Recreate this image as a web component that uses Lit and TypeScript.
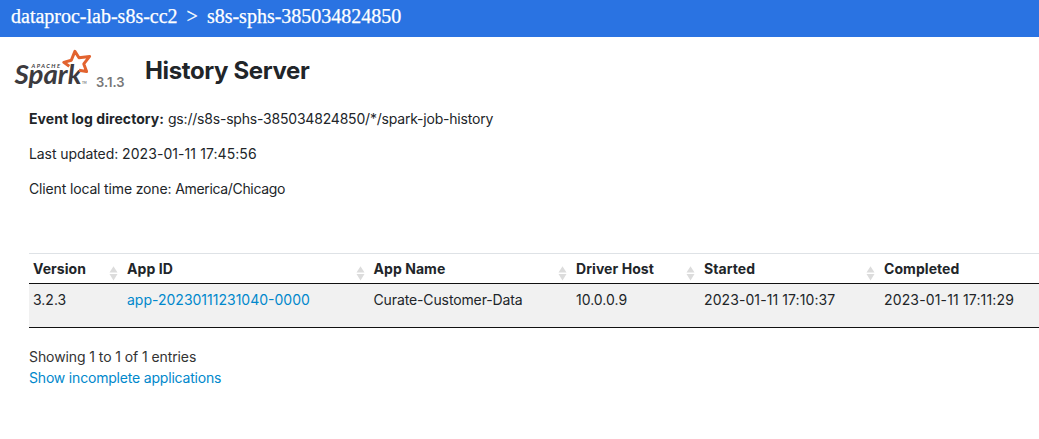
import { LitElement, html, css, svg } from "lit";
import { customElement } from "lit/decorators.js";

const columns = [
  { key: "version", label: "Version" },
  { key: "id", label: "App ID" },
  { key: "name", label: "App Name" },
  { key: "host", label: "Driver Host" },
  { key: "started", label: "Started" },
  { key: "completed", label: "Completed" },
];

const apps: Record<string, string>[] = [
  {
    version: "3.2.3",
    id: "app-20230111231040-0000",
    name: "Curate-Customer-Data",
    host: "10.0.0.9",
    started: "2023-01-11 17:10:37",
    completed: "2023-01-11 17:11:29",
  },
];

@customElement("spark-logo")
export class SparkLogo extends LitElement {
  static styles = css`
    :host { display: block; width: 80px; height: 44px; }
    svg { display: block; overflow: visible; }
    .word { font: italic 700 26.5px Lato, sans-serif; fill: #3c3a3e; }
    .small { font: italic 700 5.8px Lato, sans-serif; fill: #3c3a3e; }
    .tm { font: 3px Lato, sans-serif; fill: #3c3a3e; }
  `;
  render() {
    return html`<svg width="80" height="44" viewBox="14 48 80 44">
      ${svg`
        <text class="word" x="14.5" y="84.3" textLength="67" lengthAdjust="spacingAndGlyphs">Spark</text>
        <text class="small" x="31.5" y="67.8" textLength="28.5">APACHE</text>
        <text class="tm" x="82" y="84">TM</text>
        <path d="M69.3 66.3L63.8 62.4L71.3 60.2L74.9 51.4L79 57.8L89.6 56.4L83.8 63.9L86.6 71.6L79 70.2"
          fill="none" stroke="#e2632f" stroke-width="3" stroke-linejoin="round" />
      `}
    </svg>`;
  }
}

@customElement("app-root")
export class AppRoot extends LitElement {
  static styles = css`
    :host {
      display: block;
      height: 439px;
      overflow: hidden;
      background: #fff;
      color: #212529;
      font: 14px/21px Inter, sans-serif;
      white-space: nowrap;
    }
    .bar {
      box-sizing: border-box;
      height: 37px;
      padding: 4px 11px;
      background: #2a73e2;
      color: #fff;
      font: 20px/24px "Liberation Serif", serif;
      -webkit-text-stroke: 0.25px #fff;
      display: flex;
      gap: 9px;
    }
    .brand { display: flex; height: 62px; padding-left: 14px; }
    spark-logo { margin-top: 11px; }
    .version {
      margin: 35px 0 0 2px;
      width: 49px;
      font-size: 13px;
      font-weight: 600;
      color: #777;
    }
    h1 { margin: 18px 0 0; font-size: 24px; line-height: 32px; font-weight: 700; letter-spacing: -0.38px; }
    .info { margin: 9px 0 0; padding: 0 0 0 29px; list-style: none; }
    .info li { margin-bottom: 14px; }
    .info strong, th { font-weight: 700; letter-spacing: 0.06px; }
    .path { letter-spacing: -0.2px; }
    .label { letter-spacing: -0.08px; }
    .date { letter-spacing: 0.07px; }
    .zone { letter-spacing: -0.15px; }
    .place { letter-spacing: -0.33px; }
    table {
      margin: 54px 0 0 29px;
      width: 1060px;
      table-layout: fixed;
      border-collapse: separate;
      border-spacing: 0;
      border-top: 1px solid #dee2e6;
      border-bottom: 1px solid #111;
    }
    th, td { box-sizing: border-box; text-align: left; vertical-align: top; padding: 0 4px; }
    th { height: 30px; padding-top: 4px; border-bottom: 1px solid #111; }
    td { height: 43px; padding-top: 5px; background: #f1f1f1; }
    .c-version { width: 94px; }
    .c-id { width: 246.5px; }
    .c-name { width: 202.5px; }
    .c-host { width: 128px; }
    .c-started { width: 180px; }
    .d-name { letter-spacing: -0.12px; }
    .d-started { letter-spacing: 0.09px; }
    .d-completed { letter-spacing: 0.15px; }
    .head { display: flex; justify-content: space-between; height: 25px; }
    .sort { margin: 7px 1px 0 0; width: 9px; height: 16px; fill: #dcdcdc; }
    .link { color: #0088cc; text-decoration: none; }
    .foot { margin: 18px 0 0 29px; }
    .foot div { color: #333; letter-spacing: -0.09px; }
    .foot a { display: block; width: max-content; letter-spacing: -0.19px; }
  `;

  render() {
    return html`
      <header class="bar"><span>dataproc-lab-s8s-cc2</span><span>&gt;</span><span>s8s-sphs-385034824850</span></header>
      <div class="brand">
        <spark-logo></spark-logo>
        <span class="version">3.1.3</span>
        <h1>History Server</h1>
      </div>
      <ul class="info">
        <li><strong>Event log directory:</strong> <span class="path">gs://s8s-sphs-385034824850/*/spark-job-history</span></li>
        <li><span class="label">Last updated:</span> <span class="date">2023-01-11 17:45:56</span></li>
        <li class="zone">Client local time zone: <span class="place">America/Chicago</span></li>
      </ul>
      <table>
        <thead><tr>${columns.map((c) => html`<th class="c-${c.key}"><div class="head">${c.label}
          <svg class="sort" viewBox="0 0 9 16"><path d="M4.5 1.3L8.5 7.5H.5ZM.5 9H8.5L4.5 15.5Z" /></svg></div></th>`)}</tr></thead>
        <tbody>${apps.map((a) => html`<tr>${columns.map((c) => html`<td class="d-${c.key}">${c.key === "id"
          ? html`<a class="link">${a[c.key]}</a>` : a[c.key]}</td>`)}</tr>`)}</tbody>
      </table>
      <div class="foot"><div>Showing 1 to 1 of 1 entries</div><a class="link">Show incomplete applications</a></div>
    `;
  }
}
